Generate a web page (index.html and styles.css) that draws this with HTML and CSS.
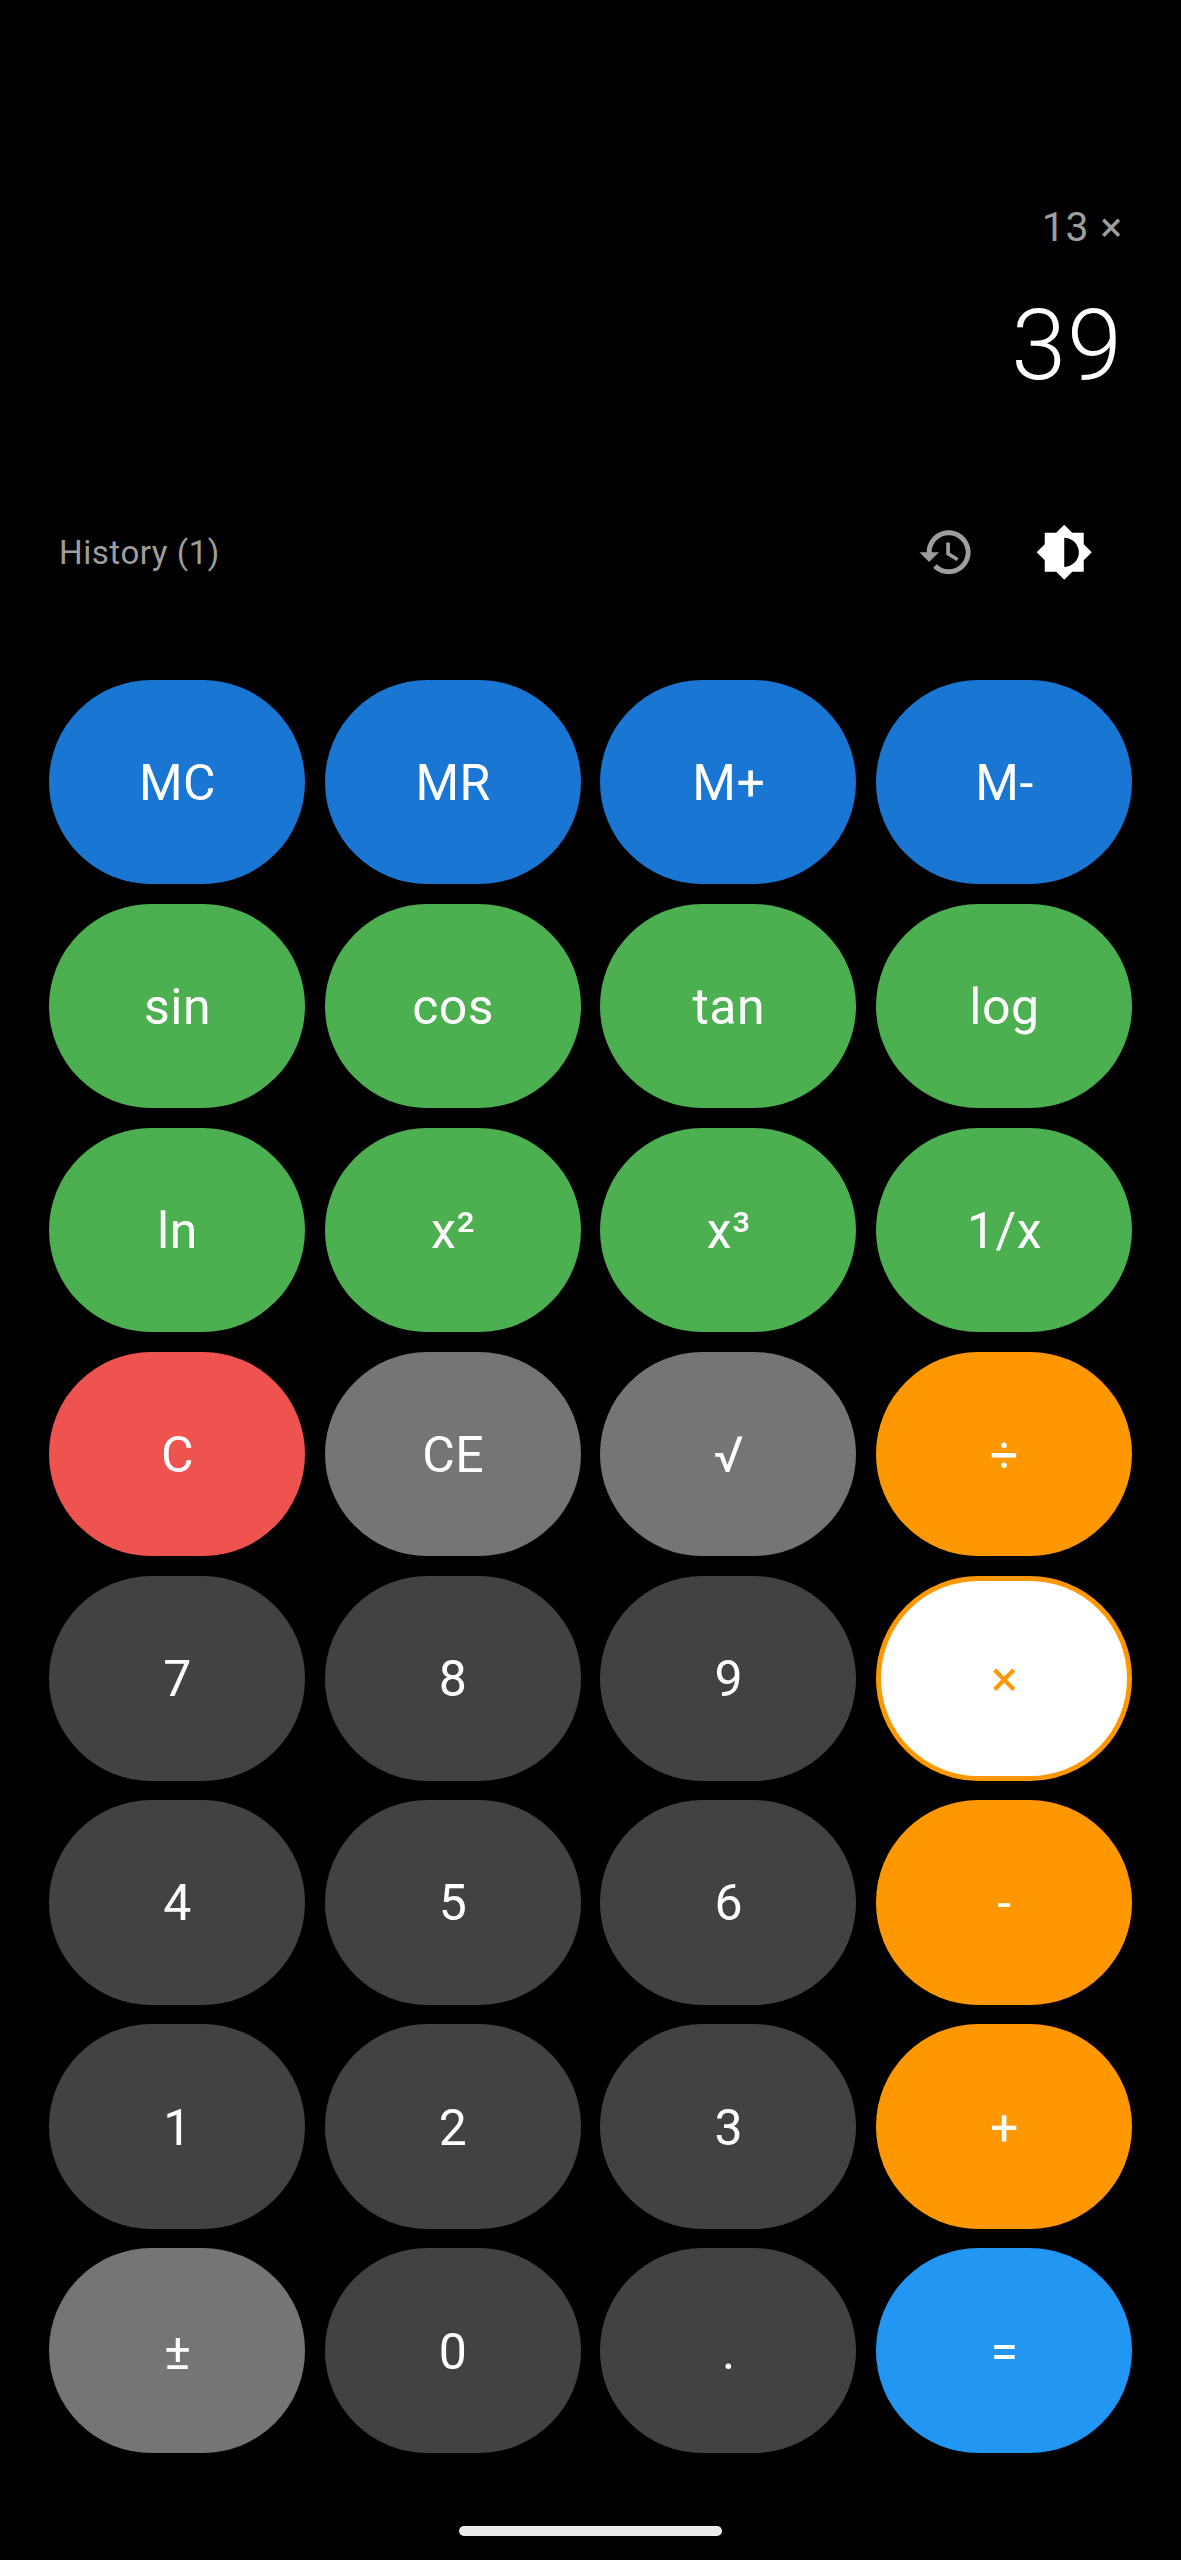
FILE: index.html
```html
<!DOCTYPE html>
<html lang="en">
<head>
<meta charset="utf-8">
<title>Calculator</title>
<link rel="stylesheet" href="styles.css">
</head>
<body>
<main class="app">
  <section class="display">
    <div class="expression">13 ×</div>
    <div class="result">39</div>
  </section>
  <section class="toolbar">
    <span class="history-label">History (1)</span>
    <div class="actions">
      <button class="icon-button muted" aria-label="History"><svg viewBox="0 0 24 24"><path d="M13 3c-4.97 0-9 4.03-9 9H1l3.89 3.89.07.14L9 12H6c0-3.87 3.13-7 7-7s7 3.13 7 7-3.13 7-7 7c-1.93 0-3.68-.79-4.94-2.06l-1.42 1.42C8.27 19.99 10.51 21 13 21c4.97 0 9-4.03 9-9s-4.03-9-9-9zm-1 5v5l4.28 2.54.72-1.21-3.5-2.08V8H12z"/></svg></button>
      <button class="icon-button" aria-label="Theme"><svg viewBox="0 0 24 24"><path d="M20 15.31L23.31 12 20 8.69V4h-4.69L12 .69 8.69 4H4v4.69L.69 12 4 15.31V20h4.69L12 23.31 15.31 20H20v-4.69zM12 18V6c3.31 0 6 2.69 6 6s-2.69 6-6 6z"/></svg></button>
    </div>
  </section>
  <section class="keypad">
    <button class="key memory">MC</button>
    <button class="key memory">MR</button>
    <button class="key memory">M+</button>
    <button class="key memory">M-</button>
    <button class="key function">sin</button>
    <button class="key function">cos</button>
    <button class="key function">tan</button>
    <button class="key function">log</button>
    <button class="key function">ln</button>
    <button class="key function">x²</button>
    <button class="key function">x³</button>
    <button class="key function">1/x</button>
    <button class="key clear">C</button>
    <button class="key utility">CE</button>
    <button class="key utility">√</button>
    <button class="key operator">÷</button>
    <button class="key">7</button>
    <button class="key">8</button>
    <button class="key">9</button>
    <button class="key operator active">×</button>
    <button class="key">4</button>
    <button class="key">5</button>
    <button class="key">6</button>
    <button class="key operator">-</button>
    <button class="key">1</button>
    <button class="key">2</button>
    <button class="key">3</button>
    <button class="key operator">+</button>
    <button class="key utility">±</button>
    <button class="key">0</button>
    <button class="key">.</button>
    <button class="key equals">=</button>
  </section>
  <div class="home-bar"></div>
</main>
</body>
</html>
```
FILE: styles.css
```css
* {
  box-sizing: border-box;
}

body {
  margin: 0;
  background: #000;
  color: #fff;
  font-family: Roboto, "Liberation Sans", sans-serif;
}

.app {
  display: flex;
  flex-direction: column;
  height: 2560px;
  overflow: hidden;
}

.display {
  display: flex;
  flex-direction: column;
  align-items: flex-end;
  height: 493px;
  padding: 197px 58px 0;
}

.expression {
  color: #9e9e9e;
  font-size: 41px;
  line-height: 60px;
  letter-spacing: 0.8px;
}

.result {
  margin-top: 29px;
  font-size: 99px;
  font-weight: 300;
  line-height: 118px;
  letter-spacing: 1px;
}

.toolbar {
  display: flex;
  align-items: center;
  justify-content: space-between;
  height: 118px;
  padding: 0 58px 0 59px;
}

.history-label {
  padding-top: 1px;
  color: #9e9e9e;
  font-size: 33.2px;
  letter-spacing: 0.5px;
}

.actions {
  display: flex;
}

.icon-button {
  display: grid;
  place-items: center;
  width: 118px;
  height: 118px;
  padding: 0;
  border: 0;
  background: none;
  color: #fff;
}

.icon-button svg {
  width: 58.5px;
  height: 58.5px;
  fill: currentColor;
}

.icon-button.muted {
  color: #9e9e9e;
}

.keypad {
  display: grid;
  grid-template-columns: repeat(4, 1fr);
  grid-auto-rows: 204.5px;
  gap: 19.65px;
  margin-top: 68.5px;
  padding: 0 49px;
}

.key {
  padding: 2px 0 0 1px;
  border: 0;
  border-radius: 102.25px;
  background: #424242;
  color: #fff;
  font-family: inherit;
  font-size: 50px;
  letter-spacing: 0.5px;
}

.memory {
  background: #1976d2;
}

.function {
  background: #4caf50;
}

.clear {
  background: #ef5350;
}

.utility {
  background: #757575;
}

.operator {
  background: #ff9800;
}

.active {
  border: 5px solid #ff9800;
  background: #fff;
  color: #ff9800;
}

.equals {
  background: #2196f3;
}

.home-bar {
  width: 263px;
  height: 10px;
  margin: 73.3px auto 0;
  border-radius: 5px;
  background: #ebebeb;
}
```
